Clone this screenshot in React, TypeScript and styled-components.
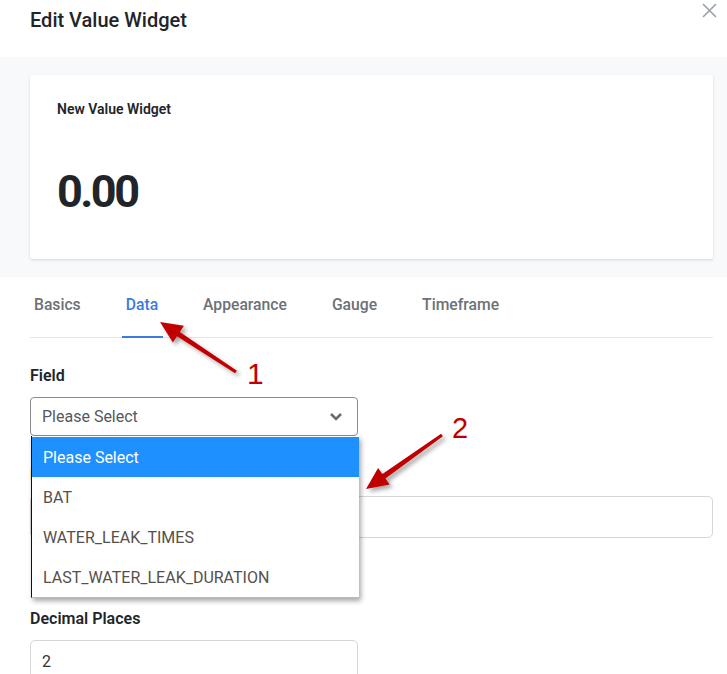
import React from "react";
import styled, { createGlobalStyle } from "styled-components";

const Global = createGlobalStyle`
  html, body { margin: 0; padding: 0; background: #ffffff; }
  body { font-family: Roboto, "Liberation Sans", Arial, sans-serif; color: #212529; }
  * { box-sizing: border-box; }
`;

const Page = styled.div`
  position: relative;
  width: 727px;
  height: 674px;
  overflow: hidden;
  background: #fff;
`;

const Header = styled.div`
  height: 57px;
  display: flex;
  justify-content: space-between;
  align-items: flex-start;
  padding: 8px 10px 0 30px;
`;

const Title = styled.h1`
  margin: 0;
  font-size: 20px;
  line-height: 24px;
  font-weight: 500;
  color: #212529;
`;

const CloseButton = styled.button`
  border: 0;
  background: transparent;
  padding: 0;
  margin-top: -5px;
  width: 15px;
  height: 15px;
  display: flex;
  cursor: pointer;
`;

const Preview = styled.div`
  background: #f8f9fa;
  padding: 18px 14px 18px 30px;
`;

const Card = styled.div`
  background: #fff;
  border-radius: 2px;
  box-shadow: 0 1px 3px rgba(0, 0, 0, 0.14);
  padding: 24px 27px 40px 27px;
`;

const CardTitle = styled.div`
  font-size: 14px;
  line-height: 20px;
  font-weight: 600;
  color: #212529;
`;

const CardValue = styled.div`
  margin-top: 45px;
  font-size: 45px;
  line-height: 55px;
  font-weight: 700;
  color: #212529;
  letter-spacing: -2.5px;
`;

const Body = styled.div`
  padding: 0 14px 0 30px;
`;

const TabList = styled.div`
  display: flex;
  gap: 36px;
  border-bottom: 1px solid #e3e6ea;
  padding-top: 18px;
`;

const Tab = styled.div<{ $active?: boolean }>`
  padding: 0 5px 21px 4px;
  margin-bottom: -1px;
  font-size: 15.7px;
  line-height: 20px;
  font-weight: 500;
  color: ${(p) => (p.$active ? "#3d7be0" : "#6c7178")};
  border-bottom: 2px solid ${(p) => (p.$active ? "#3d7be0" : "transparent")};
`;

const Group = styled.div<{ $top: number }>`
  margin-top: ${(p) => p.$top}px;
`;

const Label = styled.div`
  font-size: 16px;
  line-height: 20px;
  font-weight: 600;
  color: #212529;
  margin-bottom: 11px;
`;

const SelectWrap = styled.div`
  position: relative;
  width: 328px;
`;

const SelectBox = styled.div`
  height: 39px;
  border: 1px solid #8c8c8c;
  border-radius: 4px;
  display: flex;
  align-items: center;
  justify-content: space-between;
  padding: 0 14px 0 11px;
  font-size: 16px;
  color: #55595e;
`;

const Menu = styled.div`
  position: absolute;
  left: 1px;
  top: 39px;
  width: 328px;
  background: #fff;
  border-left: 1px solid #111;
  border-bottom: 1px solid #bbb;
  box-shadow: 2px 3px 5px rgba(0, 0, 0, 0.35);
  z-index: 5;
  padding-top: 1px;
`;

const MenuItem = styled.div<{ $selected?: boolean }>`
  height: 40px;
  display: flex;
  align-items: center;
  padding-left: 11px;
  font-size: 16px;
  color: ${(p) => (p.$selected ? "#ffffff" : "#55504b")};
  background: ${(p) => (p.$selected ? "#1e90ff" : "#ffffff")};
`;

const Input = styled.div<{ $wide?: boolean }>`
  width: ${(p) => (p.$wide ? "100%" : "328px")};
  height: 42px;
  border: 1px solid #d3d6db;
  border-radius: 5px;
  display: flex;
  align-items: center;
  padding-left: 11px;
  font-size: 16px;
  color: #333;
`;

const Overlay = styled.svg`
  position: absolute;
  left: 0;
  top: 0;
  width: 727px;
  height: 674px;
  pointer-events: none;
  z-index: 10;
  overflow: visible;
`;

type Pt = [number, number];

function arrowPoints(tail: Pt, tip: Pt, headLen = 22, headHalf = 10, tailHalf = 1.6, neckHalf = 2.6): string {
  const dx = tip[0] - tail[0];
  const dy = tip[1] - tail[1];
  const len = Math.hypot(dx, dy);
  const ux = dx / len;
  const uy = dy / len;
  const nx = -uy;
  const ny = ux;
  const bx = tip[0] - ux * headLen;
  const by = tip[1] - uy * headLen;
  const pts: Pt[] = [
    [tail[0] + nx * tailHalf, tail[1] + ny * tailHalf],
    [bx + nx * neckHalf, by + ny * neckHalf],
    [bx + nx * headHalf, by + ny * headHalf],
    tip,
    [bx - nx * headHalf, by - ny * headHalf],
    [bx - nx * neckHalf, by - ny * neckHalf],
    [tail[0] - nx * tailHalf, tail[1] - ny * tailHalf],
  ];
  return pts.map((p) => `${p[0].toFixed(1)},${p[1].toFixed(1)}`).join(" ");
}

const tabs = ["Basics", "Data", "Appearance", "Gauge", "Timeframe"];
const options = ["Please Select", "BAT", "WATER_LEAK_TIMES", "LAST_WATER_LEAK_DURATION"];

export default function App() {
  return (
    <>
      <Global />
      <Page>
        <Header>
          <Title>Edit Value Widget</Title>
          <CloseButton aria-label="Close">
            <svg width="15" height="15" viewBox="0 0 15 15">
              <path d="M1 1 L14 14 M14 1 L1 14" stroke="#9ba0a6" strokeWidth="1.6" fill="none" />
            </svg>
          </CloseButton>
        </Header>
        <Preview>
          <Card>
            <CardTitle>New Value Widget</CardTitle>
            <CardValue>0.00</CardValue>
          </Card>
        </Preview>
        <Body>
          <TabList>
            {tabs.map((t) => (
              <Tab key={t} $active={t === "Data"}>
                {t}
              </Tab>
            ))}
          </TabList>
          <Group $top={28}>
            <Label>Field</Label>
            <SelectWrap>
              <SelectBox>
                <span>Please Select</span>
                <svg width="14" height="9" viewBox="0 0 14 9">
                  <polyline points="2,2 7,7 12,2" stroke="#6b6b6b" strokeWidth="2.6" fill="none" />
                </svg>
              </SelectBox>
              <Menu>
                {options.map((o, i) => (
                  <MenuItem key={o} $selected={i === 0}>
                    {o}
                  </MenuItem>
                ))}
              </Menu>
            </SelectWrap>
          </Group>
          <Group $top={29}>
            <Label>Label</Label>
            <Input $wide />
          </Group>
          <Group $top={71}>
            <Label>Decimal Places</Label>
            <Input>2</Input>
          </Group>
        </Body>
        <Overlay viewBox="0 0 727 674">
          <defs>
            <filter id="sh" x="-20%" y="-20%" width="150%" height="150%">
              <feDropShadow dx="3" dy="3" stdDeviation="2" floodColor="#000" floodOpacity="0.35" />
            </filter>
          </defs>
          <g filter="url(#sh)" fill="#c00000">
            <polygon points={arrowPoints([236, 372], [160, 322])} />
            <polygon points={arrowPoints([442, 435], [366, 489])} />
          </g>
          <text x="247" y="384" fill="#c00000" fontFamily="Liberation Sans, Arial, sans-serif" fontSize="30">1</text>
          <text x="452" y="438" fill="#c00000" fontFamily="Liberation Sans, Arial, sans-serif" fontSize="29">2</text>
        </Overlay>
      </Page>
    </>
  );
}
